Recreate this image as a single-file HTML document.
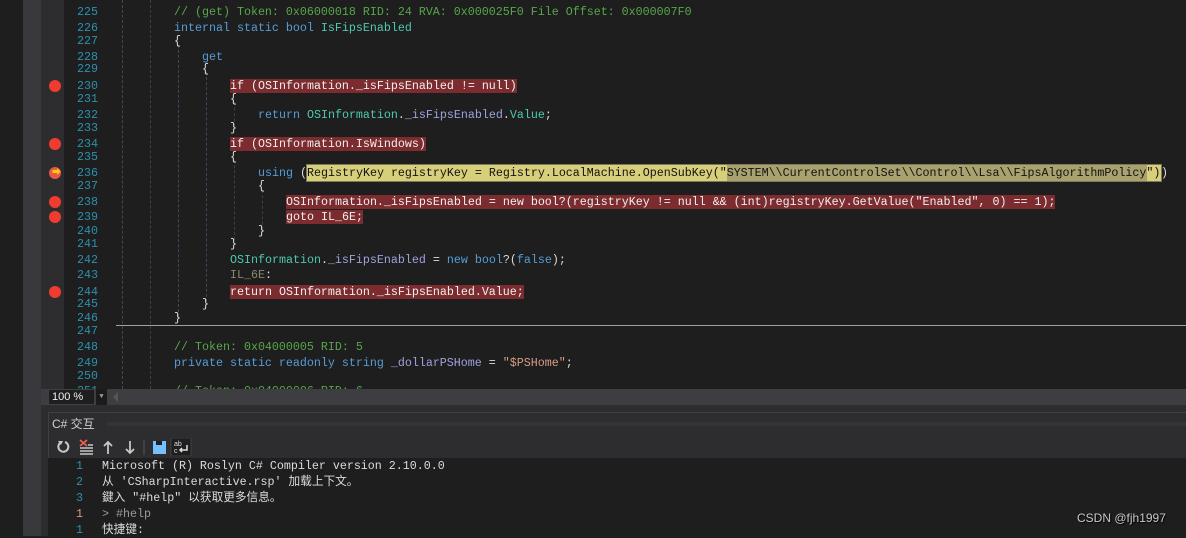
<!DOCTYPE html>
<html><head><meta charset="utf-8"><style>
*{margin:0;padding:0;box-sizing:border-box}
body{width:1186px;height:536px;overflow:hidden;background:#1e1e1e;position:relative;font-family:"Liberation Mono","Noto Sans CJK SC",monospace;font-size:11.67px;color:#dcdcdc}
.a{position:absolute}
.ln{position:absolute;left:64px;width:34px;text-align:right;color:#2b91af;height:16px;line-height:16px}
.c{position:absolute;height:16px;line-height:16px;white-space:pre}
.k{color:#569cd6}.cm{color:#57a64a}.t{color:#4ec9b0}.f{color:#a0a0e0}.s{color:#d69d85}.lb{color:#8a8a6a}
.bp{background:#7c2b2e;color:#f0f0f0}
.dot{position:absolute;left:49px;width:12px;height:12px;border-radius:50%;background:#e51400;background:#f03c30}
.g{position:absolute;width:0;border-left:1px dashed #3a4a5a}
</style></head><body>
<div class="a" style="left:0;top:0;width:23px;height:536px;background:#1e1e1e"></div>
<div class="a" style="left:23px;top:0;width:18px;height:536px;background:#38383d"></div>
<div class="a" style="left:41px;top:0;width:23px;height:389px;background:#2d2d30"></div>
<div class="g" style="left:122px;top:0;height:389px"></div>
<div class="g" style="left:150px;top:0;height:389px;border-color:#2f4a3a"></div>
<div class="g" style="left:178px;top:45px;height:272px"></div>
<div class="g" style="left:206px;top:72px;height:230px"></div>
<div class="g" style="left:234px;top:102px;height:25px;border-color:#2f4a3a"></div>
<div class="g" style="left:234px;top:160px;height:80px;border-color:#2f4a3a"></div>
<div class="g" style="left:262px;top:190px;height:40px;border-color:#2f4a3a"></div>
<div class="a" style="left:116px;top:325px;width:1070px;height:1px;background:#a0a0a0"></div>

<div class="dot" style="top:80px"></div>
<div class="dot" style="top:138px"></div>
<div class="dot" style="top:167px;background:#e8584a"></div>
<div class="a" style="left:52px;top:170px;font-size:9px;line-height:6px;color:#ffcc00">➡</div>
<div class="dot" style="top:196px"></div>
<div class="dot" style="top:211px"></div>
<div class="dot" style="top:286px"></div>

<div class="ln" style="top:4px">225</div><div class="c" style="left:174px;top:4px"><span class="cm">// (get) Token: 0x06000018 RID: 24 RVA: 0x000025F0 File Offset: 0x000007F0</span></div>
<div class="ln" style="top:20px">226</div><div class="c" style="left:174px;top:20px"><span class="k">internal static bool </span><span class="t">IsFipsEnabled</span></div>
<div class="ln" style="top:33px">227</div><div class="c" style="left:174px;top:33px">{</div>
<div class="ln" style="top:49px">228</div><div class="c" style="left:202px;top:49px"><span class="k">get</span></div>
<div class="ln" style="top:61px">229</div><div class="c" style="left:202px;top:61px">{</div>
<div class="ln" style="top:78px">230</div><div class="c" style="left:230px;top:78px"><span class="bp">if (OSInformation._isFipsEnabled != null)</span></div>
<div class="ln" style="top:91px">231</div><div class="c" style="left:230px;top:91px">{</div>
<div class="ln" style="top:107px">232</div><div class="c" style="left:258px;top:107px"><span class="k">return </span><span class="t">OSInformation</span>.<span class="f">_isFipsEnabled</span>.<span class="t">Value</span>;</div>
<div class="ln" style="top:120px">233</div><div class="c" style="left:230px;top:120px">}</div>
<div class="ln" style="top:136px">234</div><div class="c" style="left:230px;top:136px"><span class="bp">if (OSInformation.IsWindows)</span></div>
<div class="ln" style="top:149px">235</div><div class="c" style="left:230px;top:149px">{</div>
<div class="ln" style="top:165px">236</div><div class="c" style="left:258px;top:165px"><span class="k">using</span> (</div>
<div class="a" style="left:306px;top:164px;width:856px;height:18px;background:#d8cf7a;border:1px solid #7a7a5a"></div>
<div class="a" style="left:727px;top:165px;width:420px;height:16px;background:#a9a26e"></div>
<div class="c" style="left:307px;top:165px;color:#111">RegistryKey registryKey = Registry.LocalMachine.OpenSubKey("SYSTEM\\CurrentControlSet\\Control\\Lsa\\FipsAlgorithmPolicy")</div>
<div class="c" style="left:1161px;top:165px">)</div>
<div class="ln" style="top:178px">237</div><div class="c" style="left:258px;top:178px">{</div>
<div class="ln" style="top:194px">238</div><div class="c" style="left:286px;top:194px"><span class="bp">OSInformation._isFipsEnabled = new bool?(registryKey != null &amp;&amp; (int)registryKey.GetValue("Enabled", 0) == 1);</span></div>
<div class="ln" style="top:209px">239</div><div class="c" style="left:286px;top:209px"><span class="bp">goto IL_6E;</span></div>
<div class="ln" style="top:223px">240</div><div class="c" style="left:258px;top:223px">}</div>
<div class="ln" style="top:236px">241</div><div class="c" style="left:230px;top:236px">}</div>
<div class="ln" style="top:252px">242</div><div class="c" style="left:230px;top:252px"><span class="t">OSInformation</span>.<span class="f">_isFipsEnabled</span> = <span class="k">new bool</span>?(<span class="k">false</span>);</div>
<div class="ln" style="top:267px">243</div><div class="c" style="left:230px;top:267px"><span class="lb">IL_6E</span>:</div>
<div class="ln" style="top:284px">244</div><div class="c" style="left:230px;top:284px"><span class="bp">return OSInformation._isFipsEnabled.Value;</span></div>
<div class="ln" style="top:296px">245</div><div class="c" style="left:202px;top:296px">}</div>
<div class="ln" style="top:310px">246</div><div class="c" style="left:174px;top:310px">}</div>
<div class="ln" style="top:323px">247</div>
<div class="ln" style="top:339px">248</div><div class="c" style="left:174px;top:339px"><span class="cm">// Token: 0x04000005 RID: 5</span></div>
<div class="ln" style="top:355px">249</div><div class="c" style="left:174px;top:355px"><span class="k">private static readonly string </span><span class="f">_dollarPSHome</span> = <span class="s">"$PSHome"</span>;</div>
<div class="ln" style="top:368px">250</div>
<div class="ln" style="top:383px">251</div><div class="c" style="left:174px;top:383px"><span class="cm">// Token: 0x04000006 RID: 6</span></div>

<div class="a" style="left:41px;top:389px;width:1145px;height:16px;background:#3e3e42"></div>
<div class="a" style="left:48px;top:389px;width:47px;height:16px;background:#1e1e1e;border:1px solid #3f3f46;font-family:'Liberation Sans',sans-serif;font-size:11px;line-height:14px;padding-left:3px;color:#f0f0f0">100 %</div>
<div class="a" style="left:96px;top:389px;width:11px;height:16px;background:#1b1b1c;color:#999;font-size:7px;line-height:16px;text-align:center">▼</div>
<div class="a" style="left:113px;top:392px;width:0;height:0;border-top:5px solid transparent;border-bottom:5px solid transparent;border-right:5px solid #555"></div>
<div class="a" style="left:41px;top:405px;width:1145px;height:131px;background:#2d2d30"></div>
<div class="a" style="left:48px;top:412px;width:1138px;height:46px;background:#2d2d30;border-top:1px solid #3f3f46;border-left:1px solid #3f3f46"></div>
<div class="a" style="left:52px;top:416px;font-family:'Liberation Sans','Noto Sans CJK SC',sans-serif;font-size:12px;color:#d0d0d0;line-height:16px">C# 交互</div>
<div class="a" style="left:107px;top:422px;width:1079px;height:4px;background-image:radial-gradient(#4a4a4e 0.6px,transparent 0.8px);background-size:2px 2px"></div>
<svg class="a" style="left:55px;top:438px" width="140" height="18" viewBox="0 0 140 18">
<path d="M5 5 A5 5 0 1 0 10 4" stroke="#c8c8c8" stroke-width="2" fill="none"/><path d="M3 3 L8 3 L6 7z" fill="#c8c8c8"/>
<path d="M25 2 L32 8 M32 2 L25 8" stroke="#f06050" stroke-width="1.8"/><path d="M25 10 H38 M25 13 H38 M25 16 H38 M33 7 H38" stroke="#c8c8c8" stroke-width="1.4"/>
<path d="M53 16 V4 M49 8 L53 4 L57 8" stroke="#c8c8c8" stroke-width="1.8" fill="none"/>
<path d="M75 3 V15 M71 11 L75 15 L79 11" stroke="#c8c8c8" stroke-width="1.8" fill="none"/>
<path d="M89 2 V17" stroke="#555" stroke-width="1"/>
<path d="M98 3 H111 V16 H98z" fill="#75beff"/><path d="M101 3 H107 V7 H101z" fill="#1e1e1e"/>
<rect x="116" y="0" width="20" height="18" fill="#1e1e1e" stroke="#3f3f46"/>
<text x="119" y="8" font-size="7" fill="#ddd" font-family="Liberation Sans">ab</text><text x="119" y="15" font-size="7" fill="#ddd" font-family="Liberation Sans">c</text>
<path d="M132 7 V12 H125 M127 10 L125 12 L127 14" stroke="#ddd" stroke-width="1.5" fill="none"/>
</svg>
<div class="a" style="left:48px;top:458px;width:1138px;height:78px;background:#1e1e1e"></div>
<div class="ln" style="left:48px;width:35px;top:458px">1</div><div class="c" style="left:102px;top:458px">Microsoft (R) Roslyn C# Compiler version 2.10.0.0</div>
<div class="ln" style="left:48px;width:35px;top:474px">2</div><div class="c" style="left:102px;top:474px">从 'CSharpInteractive.rsp' 加载上下文。</div>
<div class="ln" style="left:48px;width:35px;top:490px">3</div><div class="c" style="left:102px;top:490px">鍵入 "#help" 以获取更多信息。</div>
<div class="ln" style="left:48px;width:35px;top:506px;color:#d69d85">1</div><div class="c" style="left:102px;top:506px;color:#9a9a9a">&gt; #help</div>
<div class="ln" style="left:48px;width:35px;top:522px">1</div><div class="c" style="left:102px;top:522px">快捷键:</div>
<div class="a" style="left:1077px;top:511px;font-family:'Liberation Sans',sans-serif;font-size:12px;color:#c8c8c8;text-shadow:1px 1px 1px #000">CSDN @fjh1997</div>
</body></html>
